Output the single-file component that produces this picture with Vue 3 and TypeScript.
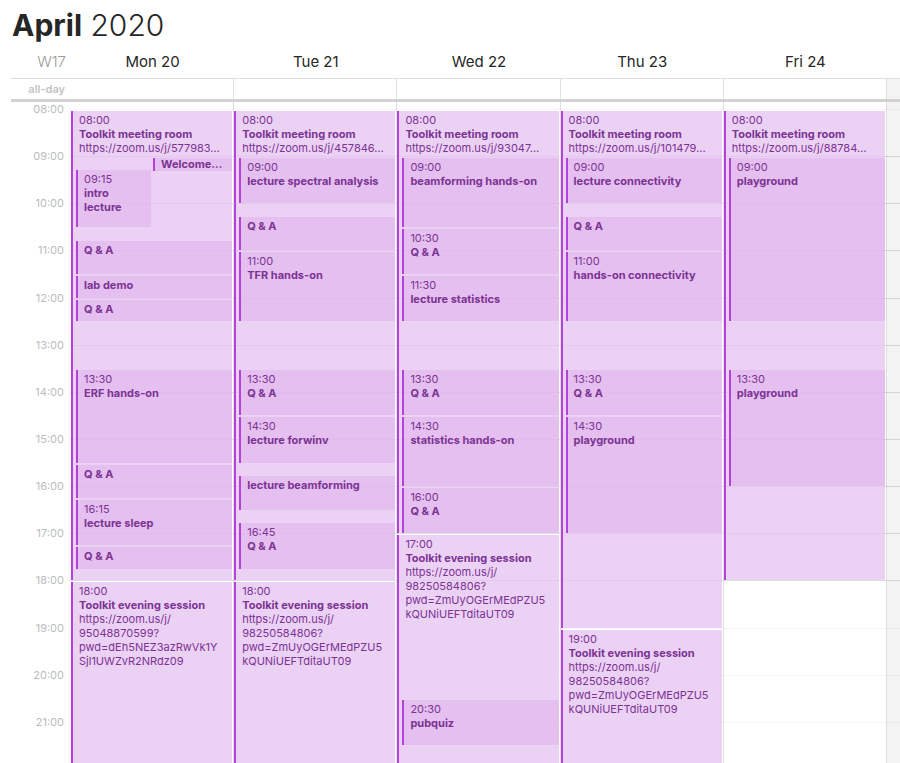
<script setup lang="ts">
interface CalendarEvent {
  start: number
  end: number
  title: string
  time?: string
  link?: string[]
  kind: 'session' | 'talk' | 'left-half' | 'right-half'
}

interface Day {
  label: string
  events: CalendarEvent[]
}

const firstHour = 8
const hours = Array.from({ length: 14 }, (_, i) => firstHour + i)

const fmt = (h: number): string => {
  const minutes = Math.round((h % 1) * 60)
  return `${String(Math.floor(h)).padStart(2, '0')}:${String(minutes).padStart(2, '0')}`
}

const room = (code: string, end: number): CalendarEvent => ({
  start: 8, end, title: 'Toolkit meeting room', time: '08:00',
  link: [`https://zoom.us/j/${code}…`], kind: 'session',
})

const evening = (start: number, link: string[]): CalendarEvent => ({
  start, end: 22, title: 'Toolkit evening session', time: fmt(start), link, kind: 'session',
})

const talk = (start: number, end: number, title: string, showTime = true): CalendarEvent => ({
  start, end, title, time: showTime ? fmt(start) : undefined, kind: 'talk',
})

const sharedLink = ['https://zoom.us/j/', '98250584806?', 'pwd=ZmUyOGErMEdPZU5', 'kQUNiUEFTditaUT09']

const days: Day[] = [
  {
    label: 'Mon 20',
    events: [
      room('577983', 18),
      { start: 9, end: 9.25, title: 'Welcome…', kind: 'right-half' },
      { start: 9.25, end: 10.5, title: 'intro lecture', time: '09:15', kind: 'left-half' },
      talk(10.75, 11.5, 'Q & A', false),
      talk(11.5, 12, 'lab demo', false),
      talk(12, 12.5, 'Q & A', false),
      talk(13.5, 15.5, 'ERF hands-on'),
      talk(15.5, 16.25, 'Q & A', false),
      talk(16.25, 17.25, 'lecture sleep'),
      talk(17.25, 17.75, 'Q & A', false),
      evening(18, ['https://zoom.us/j/', '95048870599?', 'pwd=dEh5NEZ3azRwVk1Y', 'Sjl1UWZvR2NRdz09']),
    ],
  },
  {
    label: 'Tue 21',
    events: [
      room('457846', 18),
      talk(9, 10, 'lecture spectral analysis'),
      talk(10.25, 11, 'Q & A', false),
      talk(11, 12.5, 'TFR hands-on'),
      talk(13.5, 14.5, 'Q & A'),
      talk(14.5, 15.5, 'lecture forwinv'),
      talk(15.75, 16.5, 'lecture beamforming', false),
      talk(16.75, 17.75, 'Q & A'),
      evening(18, sharedLink),
    ],
  },
  {
    label: 'Wed 22',
    events: [
      room('93047', 17),
      talk(9, 10.5, 'beamforming hands-on'),
      talk(10.5, 11.5, 'Q & A'),
      talk(11.5, 12.5, 'lecture statistics'),
      talk(13.5, 14.5, 'Q & A'),
      talk(14.5, 16, 'statistics hands-on'),
      talk(16, 17, 'Q & A'),
      evening(17, sharedLink),
      talk(20.5, 21.5, 'pubquiz'),
    ],
  },
  {
    label: 'Thu 23',
    events: [
      room('101479', 19),
      talk(9, 10, 'lecture connectivity'),
      talk(10.25, 11, 'Q & A', false),
      talk(11, 12.5, 'hands-on connectivity'),
      talk(13.5, 14.5, 'Q & A'),
      talk(14.5, 17, 'playground'),
      evening(19, sharedLink),
    ],
  },
  {
    label: 'Fri 24',
    events: [
      room('88784', 18),
      talk(9, 12.5, 'playground'),
      talk(13.5, 16, 'playground'),
    ],
  },
]

const quarter = (h: number): number => (h - firstHour) * 4 + 1
const place = (e: CalendarEvent) => ({ gridRow: `${quarter(e.start)} / ${quarter(e.end)}` })
</script>

<template>
  <main class="calendar">
    <h1 class="title"><strong>April</strong> 2020</h1>

    <header class="columns day-names">
      <span class="week">W17</span>
      <h2 v-for="day in days" :key="day.label" class="day-name">{{ day.label }}</h2>
      <span></span>
    </header>

    <div class="columns all-day">
      <span class="all-day-label">all-day</span>
      <span v-for="(day, i) in days" :key="day.label" class="cell" :class="{ first: i === 0 }"></span>
      <span class="cell weekend"></span>
    </div>

    <div class="viewport">
      <div class="columns board">
        <div class="hours">
          <time v-for="h in hours" :key="h" class="hour">{{ fmt(h) }}</time>
        </div>
        <section
          v-for="(day, i) in days"
          :key="day.label"
          class="cell day"
          :class="{ first: i === 0 }"
          :aria-label="day.label"
        >
          <article
            v-for="(e, n) in day.events"
            :key="n"
            class="event"
            :class="e.kind"
            :style="place(e)"
          >
            <time v-if="e.time" class="line">{{ e.time }}</time>
            <strong class="line name">{{ e.title }}</strong>
            <span v-for="part in e.link" :key="part" class="line link">{{ part }}</span>
          </article>
        </section>
        <div class="cell weekend"></div>
        <div class="rules" aria-hidden="true">
          <span
            v-for="h in hours"
            :key="h"
            class="rule"
            :class="{ faint: h === 8 || h > 18 }"
          ></span>
        </div>
      </div>
    </div>
  </main>
</template>

<style>
body {
  margin: 0;
  background: #fff;
}
</style>

<style scoped>
.calendar {
  display: flex;
  flex-direction: column;
  height: 100vh;
  overflow: hidden;
  font-family: Inter, "Liberation Sans", sans-serif;
  color: #262626;
}
.title {
  margin: 0;
  padding: 5px 12px 0;
  font-size: 30px;
  line-height: 40px;
  font-weight: 300;
}
.title strong {
  font-weight: 700;
}
.columns {
  display: grid;
  grid-template-columns: 59px repeat(5, minmax(0, 1fr)) 14px;
  margin-left: 11px;
}
.day-names {
  height: 33px;
  align-items: center;
  border-bottom: 1px solid #dedede;
}
.week,
.day-name {
  margin: 0;
  font-size: 15px;
  line-height: 20px;
  font-weight: 400;
}
.week {
  padding-right: 4px;
  text-align: right;
  color: #9a9a9a;
  font-weight: 300;
}
.day-name {
  padding-left: 2px;
  text-align: center;
}
.all-day {
  height: 20px;
  border-bottom: 3px solid #d2d2d2;
}
.all-day-label {
  padding-right: 5px;
  text-align: right;
  font-size: 11px;
  line-height: 20px;
  font-weight: 600;
  color: #c4c4c4;
}
.cell {
  border-left: 1px solid #e0e0e0;
}
.cell.first {
  border-left-color: transparent;
}
.weekend {
  background: #f3f3f3;
}
.viewport {
  flex: 1;
  min-height: 0;
  overflow: hidden;
}
.board {
  grid-template-rows: 667px;
}
.board > * {
  grid-row: 1;
}
.hours {
  display: grid;
  grid-template-rows: repeat(14, 1fr);
  height: 660px;
  padding-right: 6px;
  text-align: right;
}
.hour {
  font-size: 11px;
  line-height: 14px;
  color: #bcbcbc;
}
.day {
  z-index: 1;
  display: grid;
  grid-template-rows: repeat(56, minmax(0, 1fr));
  grid-template-columns: minmax(0, 1fr) minmax(0, 1fr);
  padding-top: 7px;
}
.event {
  grid-column: 1 / 3;
  margin: 2px 1px 0 5px;
  padding: 2px 0 0 6px;
  border-left: 2px solid #b441da;
  background: rgba(221, 173, 234, 0.5);
  color: #7c3394;
  font-size: 11px;
  line-height: 14px;
  overflow: hidden;
}
.session {
  margin-left: 0;
  background: rgba(228, 194, 240, 0.75);
}
.left-half {
  grid-column: 1;
}
.right-half {
  grid-column: 2;
  align-self: start;
  margin-left: 1px;
  padding-top: 0;
  line-height: 13px;
}
.line {
  display: block;
}
.name {
  font-weight: 700;
}
.left-half .name {
  width: min-content;
}
.link {
  white-space: nowrap;
}
.rules {
  grid-column: 2 / -1;
  display: grid;
  grid-template-rows: repeat(14, 1fr);
  padding-top: 7px;
}
.hours {
  grid-column: 1;
}
.day:nth-child(2) {
  grid-column: 2;
}
.day:nth-child(3) {
  grid-column: 3;
}
.day:nth-child(4) {
  grid-column: 4;
}
.day:nth-child(5) {
  grid-column: 5;
}
.day:nth-child(6) {
  grid-column: 6;
}
.board > .weekend {
  grid-column: 7;
}
.rule {
  border-top: 1px solid rgba(0, 0, 0, 0.13);
}
.rule.faint {
  border-top-color: rgba(0, 0, 0, 0.04);
}
</style>
